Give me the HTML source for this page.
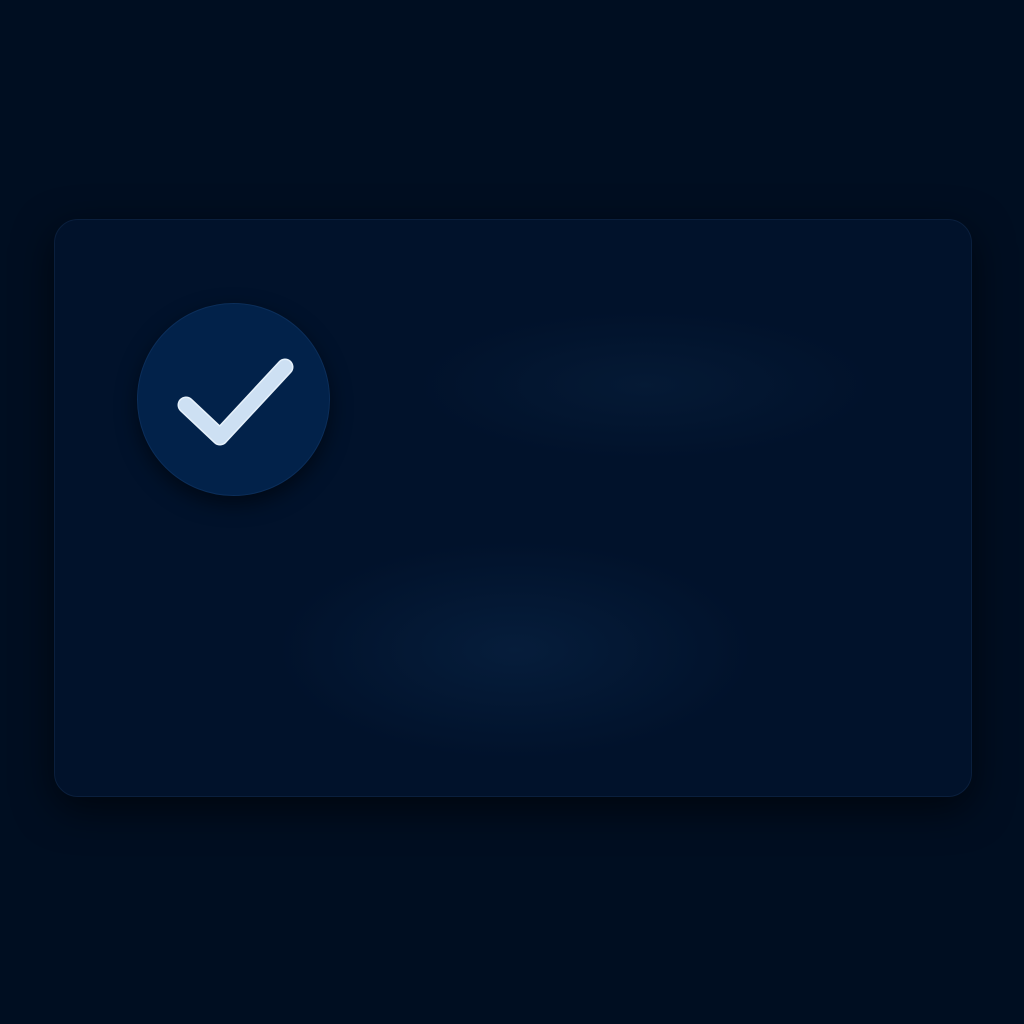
<!DOCTYPE html>
<html><head><style>
html,body{margin:0;padding:0;width:1024px;height:1024px;background:#000e21;overflow:hidden}
.card{position:absolute;left:54px;top:219px;width:916px;height:576px;border-radius:24px;background:#01122b;border:1px solid #0a1f3d;box-shadow:0 12px 40px rgba(0,0,0,0.6);overflow:hidden}
.g1{position:absolute;left:360px;top:90px;width:460px;height:150px;border-radius:50%;background:radial-gradient(ellipse at center,rgba(10,35,65,0.45),rgba(1,19,47,0) 70%)}
.g2{position:absolute;left:220px;top:320px;width:480px;height:220px;border-radius:50%;background:radial-gradient(ellipse at center,rgba(10,38,72,0.55),rgba(1,19,47,0) 70%)}
.circ{position:absolute;left:137px;top:303px;width:191px;height:191px;border-radius:50%;background:#02224a;border:1px solid #0b2e5a;box-shadow:0 8px 20px rgba(0,0,0,0.5)}
</style></head><body>
<div class="card"><div class="g1"></div><div class="g2"></div></div>
<div class="circ">
<svg width="191" height="191" viewBox="0 0 191 191"><path d="M48 101 L82 133 L147 63" fill="none" stroke="#e6f1fb" stroke-width="17" stroke-linecap="round" stroke-linejoin="round"/><path d="M48 101 L82 133 L147 63" fill="none" stroke="#cde0f3" stroke-width="14" stroke-linecap="round" stroke-linejoin="round"/></svg>
</div>
</body></html>
